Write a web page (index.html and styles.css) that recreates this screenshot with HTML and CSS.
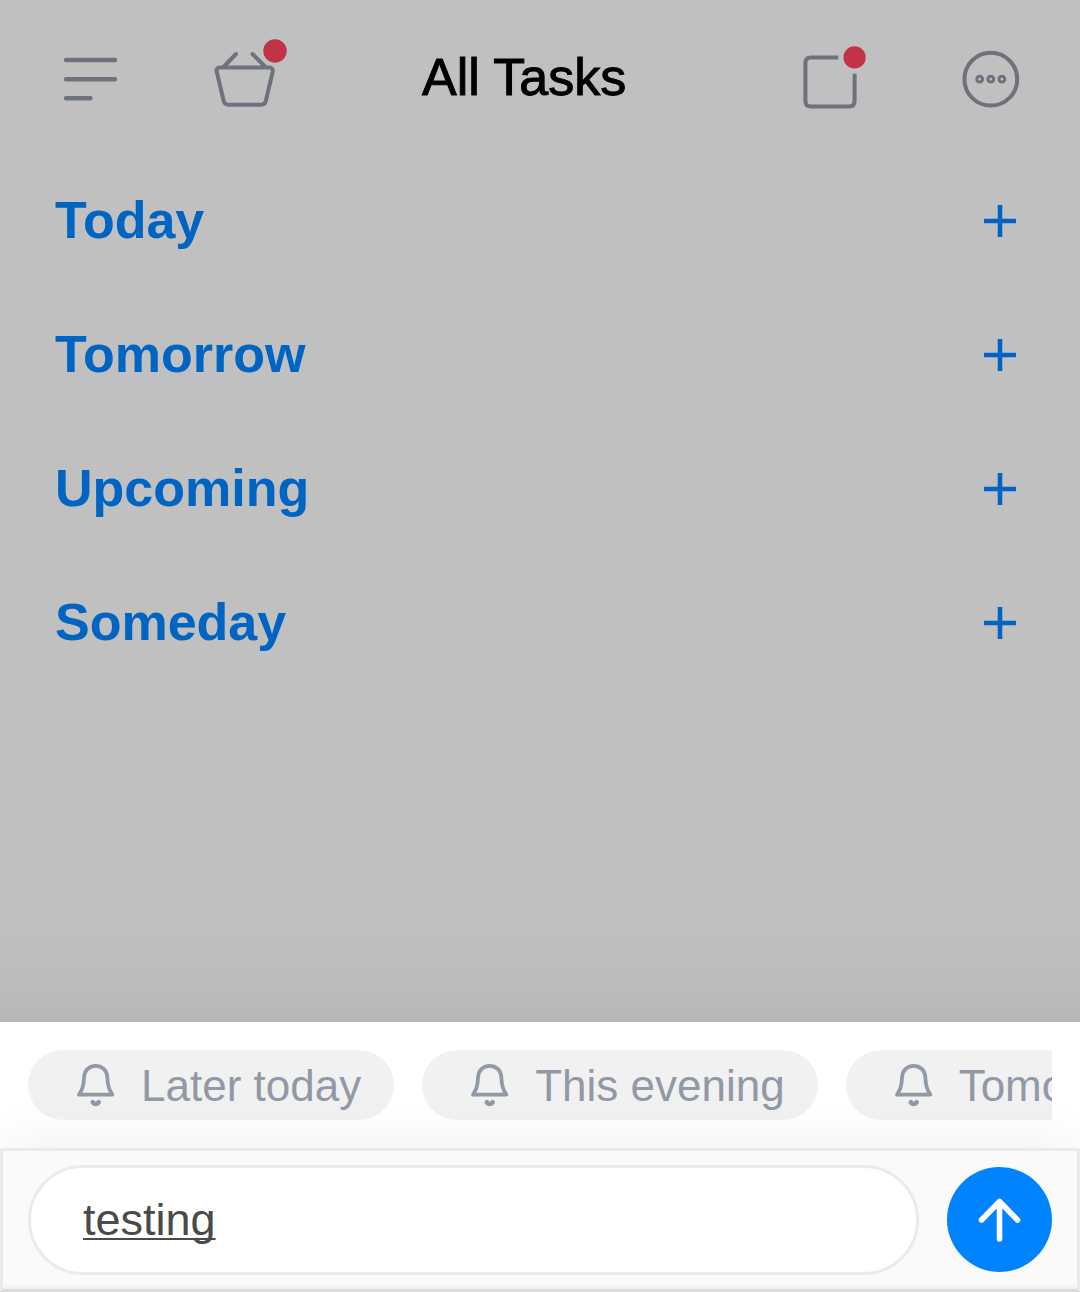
FILE: index.html
```html
<!DOCTYPE html>
<html lang="en">
<head>
<meta charset="utf-8">
<meta name="viewport" content="width=device-width, initial-scale=1">
<title>All Tasks</title>
<link rel="stylesheet" href="styles.css">
</head>
<body>
<svg class="symbols" aria-hidden="true">
  <symbol id="bell" viewBox="0 0 42 46">
    <path d="M5 32.6H38.4C35 28 33.6 24 33.400 16C33.200 8.500 28.500 3.800 21.700 3.800S10.200 8.500 10 16C9.800 24 8.400 28 5 32.600Z"/>
    <path stroke-width="4.6" d="M18.800 40.300Q21.700 43.800 24.700 40.300"/>
  </symbol>
  <symbol id="plus" viewBox="0 0 32 32"><path d="M16 0V32M0 16H32"/></symbol>
</svg>
<header class="topbar">
  <button class="icon-button" type="button" aria-label="Menu">
    <svg class="icon" width="56" height="76" viewBox="63 39 56 76"><path class="thick" d="M66 60H115M66 79.2H115M66 98.3H90.5"/></svg>
  </button>
  <button class="icon-button basket" type="button" aria-label="Basket">
    <svg class="icon" width="74" height="76" viewBox="214 39 74 76">
      <path d="M224 66.500L236 54M265 66.500L252.500 54M220 67.500H269Q273.500 67.500 272.600 72L265.800 101Q264.800 104.700 261 104.700H228.500Q224.800 104.700 223.700 101L216.800 72Q215.700 67.500 220 67.500Z"/>
      <circle class="dot" cx="275" cy="51" r="11.7"/>
    </svg>
  </button>
  <h1 class="title">All Tasks</h1>
  <button class="icon-button" type="button" aria-label="Notifications">
    <svg class="icon" width="64" height="76" viewBox="803 39 64 76">
      <path class="butt" d="M838.300 57.400H811Q805.400 57.400 805.400 63V101Q805.400 106.600 811 106.600H849Q854.600 106.600 854.600 101V73.700"/>
      <circle class="dot" cx="854.600" cy="57.400" r="11.100"/>
    </svg>
  </button>
  <button class="icon-button more" type="button" aria-label="More">
    <svg class="icon" width="58" height="76" viewBox="962 39 58 76">
      <circle cx="990.800" cy="79.200" r="26.400"/>
      <g class="rings"><circle cx="979.700" cy="79.200" r="2.900"/><circle cx="990.800" cy="79.200" r="2.900"/><circle cx="1001.900" cy="79.200" r="2.900"/></g>
    </svg>
  </button>
</header>
<main class="tasks">
  <section class="group"><h2>Today</h2><button class="icon-button" type="button" aria-label="Add to Today"><svg class="plus"><use href="#plus"/></svg></button></section>
  <section class="group"><h2>Tomorrow</h2><button class="icon-button" type="button" aria-label="Add to Tomorrow"><svg class="plus"><use href="#plus"/></svg></button></section>
  <section class="group"><h2>Upcoming</h2><button class="icon-button" type="button" aria-label="Add to Upcoming"><svg class="plus"><use href="#plus"/></svg></button></section>
  <section class="group"><h2>Someday</h2><button class="icon-button" type="button" aria-label="Add to Someday"><svg class="plus"><use href="#plus"/></svg></button></section>
</main>
<form class="composer">
  <div class="suggestions">
    <div class="chips">
      <button class="chip" type="button"><svg class="bell"><use href="#bell"/></svg>Later today</button>
      <button class="chip" type="button"><svg class="bell"><use href="#bell"/></svg>This evening</button>
      <button class="chip" type="button"><svg class="bell"><use href="#bell"/></svg>Tomorrow</button>
    </div>
  </div>
  <div class="entry">
    <input class="field" type="text" value="testing" aria-label="New task" spellcheck="false">
    <button class="send" type="submit" aria-label="Add task">
      <svg width="48" height="48" viewBox="0 0 48 48"><path d="M23.500 43V5.500M5.500 24L23.500 5.500L41.500 24"/></svg>
    </button>
  </div>
</form>
</body>
</html>
```
FILE: styles.css
```css
* {
  box-sizing: border-box;
}

body {
  margin: 0;
  min-height: 100vh;
  display: flex;
  flex-direction: column;
  background: #c0c0c0;
  font-family: "Liberation Sans", Arial, sans-serif;
}

h1,
h2 {
  margin: 0;
}

button,
input {
  font: inherit;
}

svg {
  display: block;
  flex: none;
}

.symbols {
  position: absolute;
  width: 0;
  height: 0;
}

.icon-button {
  padding: 0;
  border: 0;
  background: none;
}

.topbar {
  display: flex;
  align-items: center;
  height: 154px;
  padding: 0 60px 0 63px;
}

.icon {
  fill: none;
  stroke: #6d727b;
  stroke-width: 4;
  stroke-linecap: round;
  stroke-linejoin: round;
}

.icon .thick {
  stroke-width: 4.4;
}

.icon .butt {
  stroke-linecap: butt;
}

.icon .dot {
  fill: #c23445;
  stroke: none;
}

.rings {
  stroke-width: 3;
}

.basket,
.more {
  margin-left: 95px;
}

.title {
  flex: 1;
  padding-left: 134px;
  color: #000;
  font-size: 52px;
  font-weight: 400;
  line-height: 60px;
  -webkit-text-stroke: 1px #000;
}

.tasks {
  flex: 1;
  padding-bottom: 120px;
  background: linear-gradient(to top, #b8b8b8, #bebebe 64px, #c0c0c0 120px);
}

.group {
  display: flex;
  align-items: center;
  justify-content: space-between;
  height: 134px;
  padding: 0 64px 0 55px;
  color: #0064c2;
}

.group h2 {
  padding-bottom: 2px;
  font-size: 52px;
  font-weight: 700;
  line-height: 60px;
}

.plus {
  width: 32px;
  height: 32px;
  stroke: #0064c2;
  stroke-width: 4.6;
}

.composer {
  background: #fff;
  overflow: hidden;
}

.suggestions {
  padding: 28px;
}

.chips {
  display: flex;
  gap: 28px;
  overflow: hidden;
}

.chip {
  flex: none;
  display: flex;
  align-items: center;
  gap: 25px;
  height: 70px;
  padding: 2px 33px 0 46px;
  border: 0;
  border-radius: 35px;
  background: #f1f1f1;
  color: #9299a6;
  font-size: 44px;
  white-space: nowrap;
}

.bell {
  width: 42px;
  height: 46px;
  margin-bottom: 2px;
  fill: none;
  stroke: #9299a6;
  stroke-width: 3.8;
  stroke-linecap: round;
  stroke-linejoin: round;
}

.entry {
  position: relative;
  display: flex;
  align-items: flex-start;
  gap: 28px;
  padding: 14px 25px;
  border: 3px solid #ebebeb;
  border-bottom-color: #dadada;
  background: #fafafa;
  box-shadow: 0 0 60px rgba(0, 0, 0, 0.07), inset 0 -4px 4px -2px rgba(0, 0, 0, 0.05);
}

.field {
  flex: 1;
  min-width: 0;
  height: 110px;
  padding: 0 52px;
  border: 3px solid #ebebeb;
  border-radius: 55px;
  background: #fff;
  color: #4a4a4a;
  font-size: 45px;
  text-decoration: underline;
  text-decoration-thickness: 2px;
  text-decoration-skip-ink: none;
  text-underline-offset: 3px;
}

.send {
  flex: none;
  display: flex;
  align-items: center;
  justify-content: center;
  width: 105px;
  height: 105px;
  margin-top: 2px;
  padding: 0;
  border: 0;
  border-radius: 50%;
  background: #0083ff;
}

.send svg {
  fill: none;
  stroke: #fff;
  stroke-width: 5.6;
  stroke-linecap: round;
  stroke-linejoin: round;
}
```
